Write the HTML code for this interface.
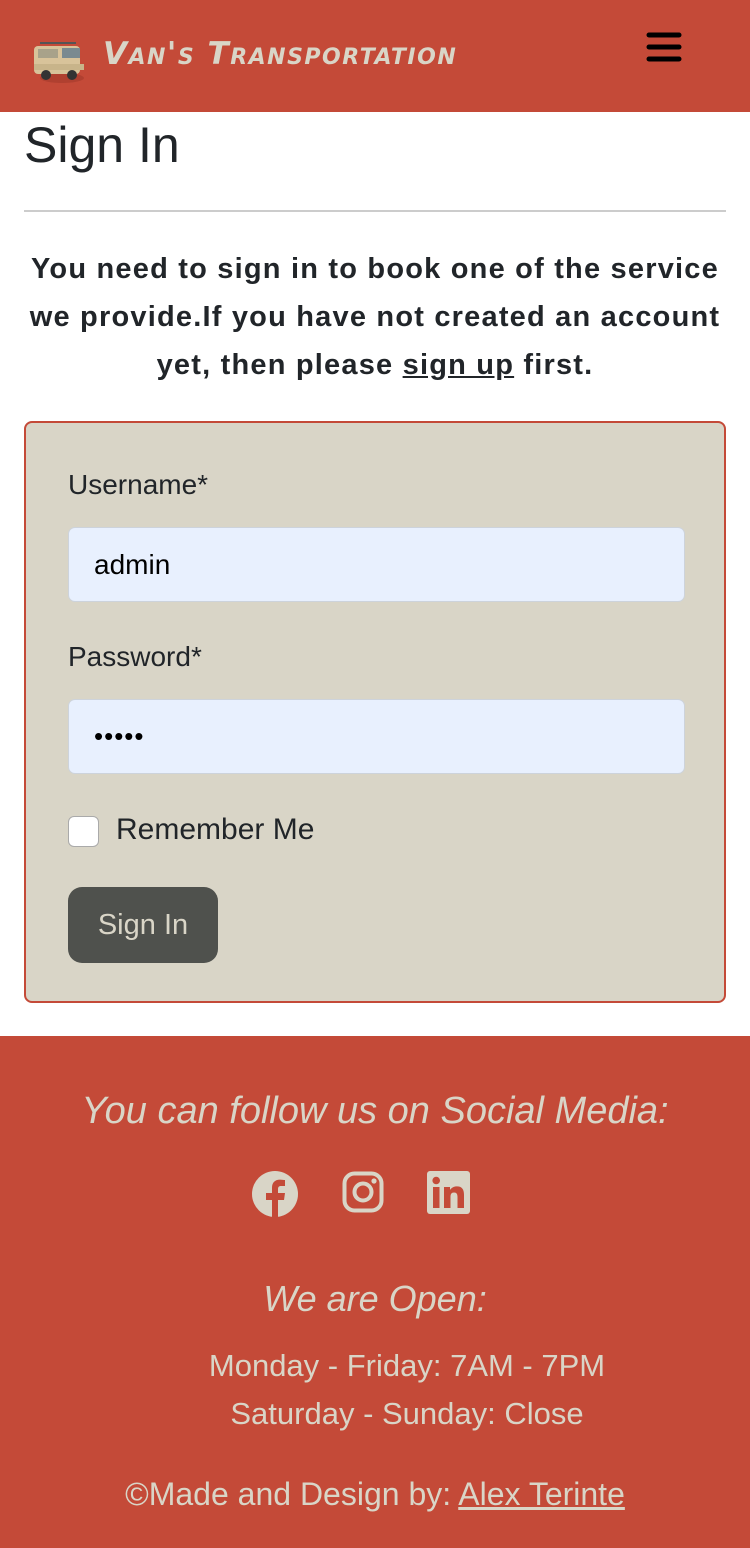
<!DOCTYPE html>
<html><head><meta charset="utf-8"><style>
*{box-sizing:border-box;margin:0;padding:0}
body{width:750px;height:1548px;font-family:"Liberation Sans",sans-serif;background:#fff;color:#212529;position:relative;overflow:hidden}
.hdr{position:absolute;left:0;top:0;width:750px;height:112px;background:#c44a38}
.logo{position:absolute;left:103px;top:36px;font-family:"DejaVu Sans","Liberation Sans",sans-serif;font-weight:bold;font-style:italic;font-size:31px;color:#d9d5c7;letter-spacing:1.5px;font-variant:small-caps}
h1{position:absolute;left:24px;top:116px;font-size:50px;font-weight:300;color:#212529}
hr{position:absolute;left:24px;top:210px;width:702px;border:0;border-top:2px solid #ccc}
.msg{position:absolute;left:20px;top:245px;width:710px;text-align:center;font-weight:bold;font-size:29px;line-height:48px;letter-spacing:1.2px}
.msg u{text-decoration:underline}
.box{position:absolute;left:24px;top:421px;width:702px;height:582px;background:#d9d5c7;border:2px solid #c44a38;border-radius:8px}
.lbl{position:absolute;left:42px;font-size:28px}
.inp{position:absolute;left:42px;width:617px;height:75px;background:#e8f0fe;border:1px solid #cdd3db;border-radius:7px;font-size:28px;padding-left:25px;line-height:73px;color:#000}
.cb{position:absolute;left:42px;top:393px;width:31px;height:31px;background:#fff;border:1px solid #aaa;border-radius:6px}
.btn{position:absolute;left:42px;top:464px;width:150px;height:76px;background:#4f514d;border-radius:14px;color:#d9d5c7;font-size:29px;text-align:center;line-height:76px}
.ftr{position:absolute;left:0;top:1036px;width:750px;height:512px;background:#c44a38;color:#d9d5c7;text-align:center}
.ftr .it{font-style:italic;font-size:38px;position:absolute;width:100%}
.ftr .t{font-size:31px;position:absolute;width:100%}
</style></head><body>
<div class="hdr">
<svg style="position:absolute;left:32px;top:38px" width="56" height="48" viewBox="0 0 56 48"><ellipse cx="30" cy="40" rx="22" ry="5" fill="#b04030"/><rect x="2" y="8" width="46" height="28" rx="4" fill="#d8c39a"/><rect x="30" y="10" width="18" height="10" fill="#7a8a90"/><rect x="6" y="11" width="20" height="9" fill="#a8a28a"/><rect x="2" y="26" width="50" height="6" fill="#c8b48a"/><circle cx="14" cy="37" r="5" fill="#333"/><circle cx="40" cy="37" r="5" fill="#333"/><line x1="8" y1="5" x2="44" y2="5" stroke="#555" stroke-width="2"/></svg>
<div class="logo">Van's Transportation</div>
<svg style="position:absolute;left:646px;top:32px" width="36" height="30" viewBox="0 0 36 30"><g stroke="#000" stroke-width="5" stroke-linecap="round"><line x1="3" y1="3" x2="33" y2="3"/><line x1="3" y1="15" x2="33" y2="15"/><line x1="3" y1="27" x2="33" y2="27"/></g></svg>
</div>
<h1>Sign In</h1>
<hr>
<div class="msg">You need to sign in to book one of the service we provide.If you have not created an account yet, then please <u>sign up</u> first.</div>
<div class="box">
<div class="lbl" style="top:46px">Username*</div>
<div class="inp" style="top:104px">admin</div>
<div class="lbl" style="top:218px">Password*</div>
<div class="inp" style="top:276px;font-size:26px;letter-spacing:1px">•••••</div>
<div class="cb"></div>
<div class="lbl" style="top:390px;left:90px;font-size:30px">Remember Me</div>
<div class="btn">Sign In</div>
</div>
<div class="ftr">
<div class="it" style="top:54px">You can follow us on Social Media:</div>
<svg style="position:absolute;left:251px;top:134px" width="48" height="48" viewBox="0 0 48 48"><circle cx="24" cy="24" r="23" fill="#d9d5c7"/><path d="M27 48V30h6l1-7h-7v-4c0-2 1-3 3-3h4V10c-1 0-3-.4-5-.4-5 0-8 3-8 8v5.4h-6v7h6v18z" fill="#c44a38"/></svg>
<svg style="position:absolute;left:342px;top:135px" width="42" height="42" viewBox="0 0 42 42"><rect x="2.5" y="2.5" width="37" height="37" rx="10" fill="none" stroke="#d9d5c7" stroke-width="4"/><circle cx="21" cy="21" r="8.5" fill="none" stroke="#d9d5c7" stroke-width="4"/><circle cx="32" cy="10" r="2.6" fill="#d9d5c7"/></svg>
<svg style="position:absolute;left:427px;top:135px" width="43" height="43" viewBox="0 0 43 43"><rect width="43" height="43" rx="3" fill="#d9d5c7"/><rect x="6" y="16" width="6.5" height="21" fill="#c44a38"/><circle cx="9.2" cy="9.5" r="3.8" fill="#c44a38"/><path d="M17 16h6v3c1.5-2.3 3.8-3.6 7-3.6 5 0 7 3 7 8.5V37h-6.5V26c0-3-1-4.5-3.5-4.5S23.5 23 23.5 26v11H17z" fill="#c44a38"/></svg>
<div class="it" style="top:242px;font-size:36px">We are Open:</div>
<div class="t" style="top:312px;left:32px">Monday - Friday: 7AM - 7PM</div>
<div class="t" style="top:360px;left:32px">Saturday - Sunday: Close</div>
<div class="t" style="top:440px;font-size:32px">©Made and Design by: <u>Alex Terinte</u></div>
</div>
</body></html>
